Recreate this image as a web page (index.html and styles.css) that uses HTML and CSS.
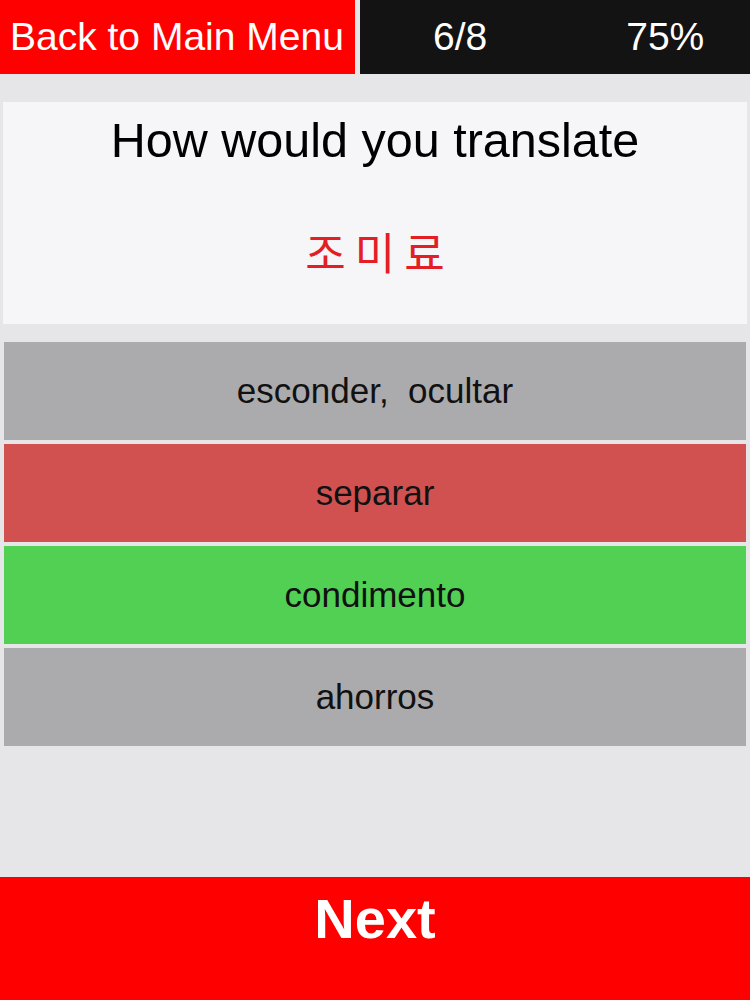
FILE: index.html
```html
<!DOCTYPE html>
<html lang="en">
<head>
<meta charset="utf-8">
<title>Quiz</title>
<link rel="stylesheet" href="styles.css">
</head>
<body>
<div class="screen">
  <header class="topbar">
    <div class="back">Back to Main Menu</div>
    <div class="stats">
      <span class="count">6/8</span>
      <span class="pct">75%</span>
    </div>
  </header>

  <section class="question">
    <div class="prompt">How would you translate</div>
    <div class="word" lang="ko">조미료</div>
  </section>

  <div class="options">
    <div class="option neutral">esconder,&nbsp; ocultar</div>
    <div class="option wrong">separar</div>
    <div class="option right">condimento</div>
    <div class="option neutral">ahorros</div>
  </div>

  <div class="next">Next</div>
</div>
</body>
</html>
```

FILE: styles.css
```css
html, body {
  margin: 0;
  padding: 0;
}

body {
  background: #e6e5e8;
  font-family: "Liberation Sans", Arial, Helvetica, sans-serif;
  color: #000;
}

.screen {
  display: flex;
  flex-direction: column;
  width: 750px;
  height: 1000px;
}

.topbar {
  display: grid;
  grid-template-columns: 355px 1fr;
  column-gap: 5px;
  height: 74px;
}

.back {
  background: #ff0000;
  color: #fff;
  font-size: 39px;
  line-height: 73px;
  padding-left: 10px;
  white-space: nowrap;
}

.stats {
  background: #131313;
  color: #fff;
  font-size: 39px;
  line-height: 73px;
  display: flex;
  padding-left: 73px;
  gap: 139px;
}

.question {
  margin: 28px 3px 0 3px;
  height: 222px;
  background: #f6f5f8;
  display: flex;
  flex-direction: column;
  align-items: center;
  box-sizing: border-box;
  padding-top: 10px;
}

.prompt {
  font-size: 48.5px;
  line-height: 56px;
}

.word {
  margin-top: 58px;
  font-family: "Noto Sans CJK KR", "Liberation Sans", sans-serif;
  font-size: 44px;
  line-height: 50px;
  color: #e31e24;
  letter-spacing: 9px;
  padding-left: 9px;
}

.options {
  margin: 18px 4px 0 4px;
  display: flex;
  flex-direction: column;
  gap: 4px;
}

.option {
  height: 98px;
  line-height: 98px;
  text-align: center;
  font-size: 35px;
  color: #111;
}

.neutral {
  background: #abaaac;
}

.wrong {
  background: #d05150;
}

.right {
  background: #52d054;
}

.next {
  margin-top: auto;
  height: 123px;
  box-sizing: border-box;
  padding-top: 10px;
  background: #ff0000;
  color: #fff;
  font-weight: bold;
  font-size: 56px;
  line-height: 63px;
  text-align: center;
}
```
